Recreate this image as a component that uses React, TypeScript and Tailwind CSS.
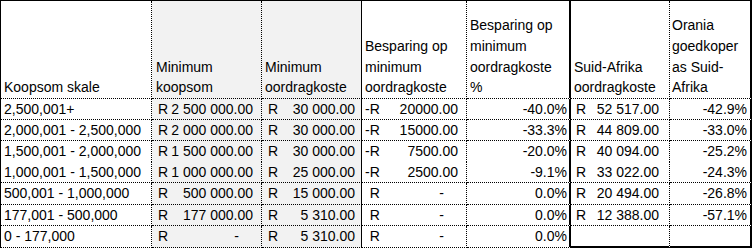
import React from "react";

type Acc = { kind: "acc"; neg?: boolean; value: string } | { kind: "zero" } | { kind: "text"; value: string } | { kind: "empty" };

const rows: { range: string; c2: Acc; c3: Acc; c4: Acc; c5: string; c6: Acc; c7: string }[] = [
  { range: "2,500,001+", c2: { kind: "acc", value: "2\u00a0500\u00a0000.00" }, c3: { kind: "acc", value: "30\u00a0000.00" }, c4: { kind: "acc", neg: true, value: "20000.00" }, c5: "-40.0%", c6: { kind: "acc", value: "52\u00a0517.00" }, c7: "-42.9%" },
  { range: "2,000,001 - 2,500,000", c2: { kind: "acc", value: "2\u00a0000\u00a0000.00" }, c3: { kind: "acc", value: "30\u00a0000.00" }, c4: { kind: "acc", neg: true, value: "15000.00" }, c5: "-33.3%", c6: { kind: "acc", value: "44\u00a0809.00" }, c7: "-33.0%" },
  { range: "1,500,001 - 2,000,000", c2: { kind: "acc", value: "1\u00a0500\u00a0000.00" }, c3: { kind: "acc", value: "30\u00a0000.00" }, c4: { kind: "acc", neg: true, value: "7500.00" }, c5: "-20.0%", c6: { kind: "acc", value: "40\u00a0094.00" }, c7: "-25.2%" },
  { range: "1,000,001 - 1,500,000", c2: { kind: "acc", value: "1\u00a0000\u00a0000.00" }, c3: { kind: "acc", value: "25\u00a0000.00" }, c4: { kind: "acc", neg: true, value: "2500.00" }, c5: "-9.1%", c6: { kind: "acc", value: "33\u00a0022.00" }, c7: "-24.3%" },
  { range: "500,001 - 1,000,000", c2: { kind: "acc", value: "500\u00a0000.00" }, c3: { kind: "acc", value: "15\u00a0000.00" }, c4: { kind: "zero" }, c5: "0.0%", c6: { kind: "acc", value: "20\u00a0494.00" }, c7: "-26.8%" },
  { range: "177,001 - 500,000", c2: { kind: "acc", value: "177\u00a0000.00" }, c3: { kind: "acc", value: "5\u00a0310.00" }, c4: { kind: "zero" }, c5: "0.0%", c6: { kind: "acc", value: "12\u00a0388.00" }, c7: "-57.1%" },
  { range: "0 - 177,000", c2: { kind: "zero" }, c3: { kind: "acc", value: "5\u00a0310.00" }, c4: { kind: "zero" }, c5: "0.0%", c6: { kind: "empty" }, c7: "" },
];

function Money({ a, minus, pad }: { a: Acc; minus?: boolean; pad: string }) {
  if (a.kind === "empty") return null;
  if (a.kind === "zero") {
    return (
      <div className={"flex h-full items-center justify-between " + pad}>
        <span>
          {minus && <span className="invisible">-</span>}R
        </span>
        <span className="mr-[14px]">-</span>
      </div>
    );
  }
  if (a.kind === "acc") {
    return (
      <div className={"flex h-full items-center justify-between " + pad}>
        <span>
          {minus && (a.neg ? <span>-</span> : <span className="invisible">-</span>)}R
        </span>
        <span>{a.value}</span>
      </div>
    );
  }
  return null;
}

const base = "border-r border-b border-dotted border-black";
const gray = "bg-[#f2f2f2]";
const solidR = "[border-right-style:solid]!";
const thickR = "border-r-2 [border-right-style:solid]!";
const thickB = "border-b-2 [border-bottom-style:solid]!";

export default function App() {
  return (
    <div className="w-[752px] h-[251px] bg-white font-['Liberation_Sans',Arial,sans-serif] text-[14px] text-black">
      <div className="grid grid-cols-[151px_110px_100px_105px_104px_99px_82px] grid-rows-[98px_21px_21px_21px_21px_22px_21px_22px] border-l border-t border-black">
        {/* header */}
        <div className={base + " flex flex-col justify-end pl-[3px] leading-[20.7px]"}>
          <span>Koopsom skale</span>
        </div>
        <div className={base + " " + gray + " flex flex-col justify-end pl-[4px] leading-[20.7px]"}>
          <span>Minimum</span>
          <span>koopsom</span>
        </div>
        <div className={base + " " + gray + " " + solidR + " flex flex-col justify-end pl-[3px] leading-[20.7px]"}>
          <span>Minimum</span>
          <span>oordragkoste</span>
        </div>
        <div className={base + " flex flex-col justify-end pl-[3px] leading-[20.7px]"}>
          <span>Besparing op</span>
          <span>minimum</span>
          <span>oordragkoste</span>
        </div>
        <div className={base + " " + thickR + " flex flex-col justify-end pl-[3px] leading-[20.7px]"}>
          <span>Besparing op</span>
          <span>minimum</span>
          <span>oordragkoste</span>
          <span>%</span>
        </div>
        <div className={base + " flex flex-col justify-end pl-[3px] leading-[20.7px]"}>
          <span>Suid-Afrika</span>
          <span>oordragkoste</span>
        </div>
        <div className={base + " " + thickR + " flex flex-col justify-end pl-[2px] leading-[20.7px]"}>
          <span>Orania</span>
          <span>goedkoper</span>
          <span>as Suid-</span>
          <span>Afrika</span>
        </div>

        {rows.map((r, i) => {
          const noB = i === 2 ? " border-b-0" : "";
          const last = i === rows.length - 1;
          return (
            <React.Fragment key={i}>
              <div className={base + noB + " flex items-center pl-[3px] whitespace-nowrap"}>{r.range}</div>
              <div className={base + noB + " " + gray}>
                <Money a={r.c2} pad="pl-[6px] pr-[8px]" />
              </div>
              <div className={base + noB + " " + gray + " " + solidR}>
                <Money a={r.c3} pad="pl-[6px] pr-[6px]" />
              </div>
              <div className={base + noB}>
                <Money a={r.c4} minus pad="pl-[3px] pr-[8px]" />
              </div>
              <div className={base + noB + " " + thickR + " flex items-center justify-end pr-[2px]"}>{r.c5}</div>
              <div className={base + noB + (last ? " " + thickB : "")}>
                <Money a={r.c6} pad="pl-[5px] pr-[10px]" />
              </div>
              <div className={base + noB + " " + thickR + (last ? " " + thickB : "") + " flex items-center justify-end pr-[3px]"}>{r.c7}</div>
            </React.Fragment>
          );
        })}
      </div>
    </div>
  );
}
